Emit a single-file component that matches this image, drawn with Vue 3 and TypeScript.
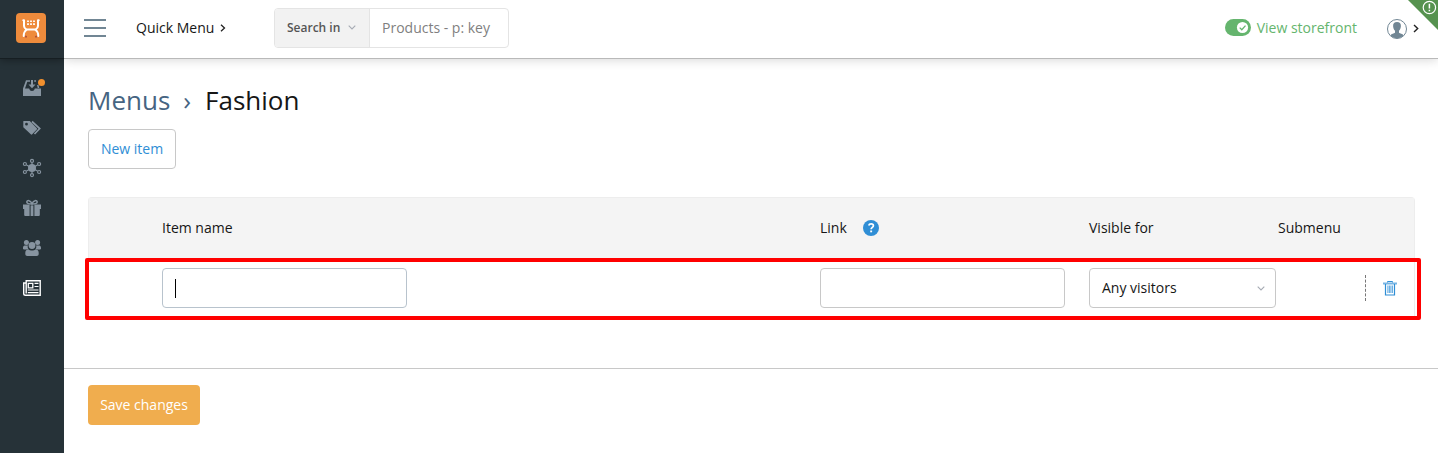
<script setup lang="ts">
import { ref } from 'vue'

const itemName = ref('')
const link = ref('')
const nav: string[] = ['orders', 'products', 'addons', 'marketing', 'customers', 'content']
</script>

<template>
  <div class="app">
    <aside class="sidebar">
      <div class="brand">
        <svg width="30" height="30" viewBox="0 0 30 30">
          <rect width="30" height="30" rx="4" fill="#ee8b3c" />
          <g fill="none" stroke="#fff" stroke-width="2" stroke-linecap="round" stroke-linejoin="round">
            <path d="M7.300 7.200H8V13c0 1.700.8 2.600 2.500 3.600h9c1.700-1 2.500-1.900 2.500-3.600V7.200h.7" />
            <path d="M10.500 16.800C8.500 18.200 7.700 19.500 7.700 23M19.500 16.800c2 1.400 2.800 2.700 2.800 6.200" />
          </g>
          <path d="M11 7.500h2v1.600h-2zM14 7.500h2v1.600h-2zM17 7.500h2v1.600h-2zM11 10.200h2v1.800h-2zM14 10.200h2v1.800h-2zM17 10.200h2v1.800h-2z" fill="#fff" opacity=".9" />
          <path d="M9 22.500l2 .5v1.500H9zM19 23l2-.5v2h-2z" fill="#b45236" />
        </svg>
      </div>
      <nav class="nav">
        <a v-for="n in nav" :key="n" class="nav-item" :class="{ active: n === 'content' }">
          <svg v-if="n === 'orders'" width="20" height="20" viewBox="0 0 20 20">
            <path d="M4 2.200h4v1.600H5.300L3 10.500h4.200c.3 1.700 1.400 2.500 2.800 2.500s2.500-.8 2.800-2.500H19V18H1v-7.500z" fill="currentColor" />
            <path d="M9 2h2v4.500h2.500L10 10.300 6.500 6.500H9zM12.200 2.200H14v1.600h-1.800zM15 7h1.500l.8 3h-1.600z" fill="currentColor" />
          </svg>
          <svg v-else-if="n === 'products'" width="20" height="20" viewBox="0 0 20 20">
            <path fill-rule="evenodd" d="M1.500 3h6.300l7 7.200a1 1 0 0 1 0 1.400l-4.600 4.700a1 1 0 0 1-1.400 0L1.300 9.200V3.500zM4.500 4.800a1.400 1.400 0 1 0 0 2.800 1.400 1.400 0 0 0 0-2.800z" fill="currentColor" />
            <path d="M10 3.500l7.700 7-5.200 5.500" fill="none" stroke="currentColor" stroke-width="1.700" />
          </svg>
          <svg v-else-if="n === 'addons'" width="20" height="20" viewBox="0 0 20 20">
            <circle cx="10" cy="10" r="4" fill="currentColor" />
            <g fill="none" stroke="currentColor" stroke-width="1.200">
              <path d="M10 4.500v11M4.500 7l11 6M15.500 7l-11 6" />
              <circle cx="10" cy="2.900" r="1.500" /><circle cx="10" cy="17.100" r="1.500" />
              <circle cx="2.900" cy="6" r="1.500" /><circle cx="17.100" cy="6" r="1.500" />
              <circle cx="2.900" cy="14" r="1.500" /><circle cx="17.100" cy="14" r="1.500" />
            </g>
          </svg>
          <svg v-else-if="n === 'marketing'" width="20" height="20" viewBox="0 0 20 20">
            <path d="M1 6.500h6.600V11H1zM12.400 6.500H19V11h-6.600zM2.200 11h5.400v7H3.200a1 1 0 0 1-1-1zM12.400 11h5.400v6a1 1 0 0 1-1 1h-4.400zM8.600 7.500h2.800V18H8.600z" fill="currentColor" />
            <path d="M10 6C8 6 4.800 5.800 4.800 4S8.500 1.500 10 6c1.500-4.500 5.200-3.800 5.200-2S12 6 10 6z" fill="none" stroke="currentColor" stroke-width="1.500" />
          </svg>
          <svg v-else-if="n === 'customers'" width="20" height="20" viewBox="0 0 20 20">
            <g fill="currentColor">
              <circle cx="4.400" cy="4.600" r="2.500" /><circle cx="15.600" cy="4.600" r="2.500" />
              <path d="M1 11V9.500C1 8 2 7.400 3.500 7.400h2.400c-.6 2 .1 3.200 1 4H2zM19 11V9.500c0-1.500-1-2.100-2.500-2.100h-2.400c.6 2-.1 3.200-1 4H18z" />
              <circle cx="10" cy="7.500" r="3.400" />
              <path d="M3.300 16v-1.300c0-2 1.300-3.200 3.200-3.200 1 .7 2 1 3.500 1s2.500-.3 3.500-1c1.900 0 3.200 1.200 3.200 3.200V16c0 1.300-.8 2-2 2H5.300c-1.200 0-2-.7-2-2z" />
            </g>
          </svg>
          <svg v-else width="20" height="20" viewBox="0 0 20 20">
            <path d="M4.200 2.700h14v14.600H3.500c-1.200 0-1.800-.6-1.800-1.800V5h2.500zM4.200 5v10.500" fill="none" stroke="currentColor" stroke-width="1.400" />
            <path d="M6.300 5.300h4.500v4.500H6.300z" fill="none" stroke="currentColor" stroke-width="1.300" />
            <path d="M12.500 5.300h4M12.500 8.500h4M5.800 12h10.700M5.800 14.600h10.700" stroke="currentColor" stroke-width="1.200" />
          </svg>
          <span v-if="n === 'orders'" class="dot"></span>
        </a>
      </nav>
    </aside>

    <div class="main">
      <header class="topbar">
        <svg class="burger" width="22" height="20" viewBox="0 0 22 20">
          <path d="M0 2h22M0 10h22M0 18h22" stroke="#718694" stroke-width="2" />
        </svg>
        <a class="quick">Quick Menu
          <svg width="6" height="8" viewBox="0 0 6 8"><path d="M1 .7L4.500 4 1 7.300" fill="none" stroke="#222" stroke-width="1.300" /></svg>
        </a>
        <div class="search">
          <button class="search-in">Search in
            <svg width="8" height="5" viewBox="0 0 8 5"><path d="M.7.700L4 4 7.300.7" fill="none" stroke="#a6abb4" stroke-width="1.100" /></svg>
          </button>
          <div class="search-box">Products - p: key</div>
        </div>
        <div class="right">
          <a class="storefront">
            <svg width="26" height="17" viewBox="0 0 26 17">
              <rect width="26" height="17" rx="8.500" fill="#65b56e" />
              <circle cx="17.500" cy="8.500" r="5.600" fill="#fff" />
              <path d="M14.700 8.600l2.100 2.100 3.700-4.100" fill="none" stroke="#65b56e" stroke-width="1.300" />
            </svg>
            <span>View storefront</span>
          </a>
          <a class="account">
            <svg width="20" height="20" viewBox="0 0 20 20">
              <circle cx="10" cy="10" r="9.500" fill="#fff" stroke="#718694" />
              <path d="M10 3c2.600 0 4 1.500 3.900 4-.1 1.800-.5 3.500-1.900 4.700v2.100c1 .8 3.600 1 4.500 2.500C15 18.200 12.700 19.300 10 19.300S5 18.200 3.500 16.300C4.400 14.800 7 14.600 8 13.800v-2.100C6.600 10.500 6.200 8.800 6.100 7 6 4.500 7.400 3 10 3z" fill="#718694" />
            </svg>
            <svg width="6" height="9" viewBox="0 0 6 9"><path d="M1 .900L4.700 4.500 1 8.100" fill="none" stroke="#222" stroke-width="1.400" /></svg>
          </a>
        </div>
        <svg class="corner" width="30" height="30" viewBox="0 0 30 30">
          <path d="M0 0h30v30z" fill="#56924f" />
          <circle cx="21.400" cy="7.500" r="6.200" fill="none" stroke="#fff" stroke-width="1.200" />
          <path d="M21.400 3.800v4.700M21.400 9.700v1.600" stroke="#fff" stroke-width="1.500" />
        </svg>
      </header>

      <main class="content">
        <h1 class="title">
          <a>Menus</a><span class="sep">›</span><span>Fashion</span>
        </h1>
        <button class="btn">New item</button>

        <section class="table">
          <div class="row head">
            <div>Item name</div>
            <div class="link-head">Link
              <svg width="16" height="16" viewBox="0 0 16 16">
                <circle cx="8" cy="8" r="8" fill="#2f8ed5" />
                <path d="M5.700 5.500C6 4.400 6.900 3.900 8.100 3.900c1.400 0 2.300.7 2.300 1.800 0 1.600-2.300 1.700-2.300 3.500" fill="none" stroke="#fff" stroke-width="1.700" />
                <path d="M7.200 10.500h1.900v1.800H7.200z" fill="#fff" />
              </svg>
            </div>
            <div>Visible for</div>
            <div>Submenu</div>
          </div>
          <div class="row body">
            <label class="field focused"><span class="caret"></span><input v-model="itemName" aria-label="Item name" /></label>
            <label class="field"><input v-model="link" aria-label="Link" /></label>
            <div class="select">Any visitors
              <svg width="8" height="5" viewBox="0 0 8 5"><path d="M.7.700L4 4 7.300.7" fill="none" stroke="#a6abb4" stroke-width="1.100" /></svg>
            </div>
            <div class="tools">
              <svg class="divider" width="1" height="26" viewBox="0 0 1 26"><path d="M.5 0v26" stroke="#777" stroke-dasharray="3 1.600" /></svg>
              <svg class="trash" width="14" height="15" viewBox="0 0 14 15">
                <path d="M0 1.500h14v2H0z" fill="#2f8ed5" opacity=".65" />
                <g fill="none" stroke="#2f8ed5">
                  <path d="M4.500 1.500V.5h5v1" />
                  <path d="M2.500 3v11h9V3" stroke-width="1.200" />
                  <path d="M4.900 4.500V12M6.400 4.500V12M7.900 4.500V12M9.400 4.500V12" stroke-width=".8" />
                </g>
              </svg>
            </div>
            <div class="highlight"></div>
          </div>
        </section>
      </main>

      <footer class="footer">
        <button class="save">Save changes</button>
      </footer>
    </div>
  </div>
</template>

<style>
body { margin: 0; overflow: hidden; background: #fff; }
</style>

<style scoped>
* { box-sizing: border-box; }
.app {
  display: grid;
  grid-template-columns: 64px 1fr;
  height: 453px;
  font: 14px/20px "Open Sans", sans-serif;
  color: #161616;
}
svg { display: block; flex: none; }
button { font: inherit; margin: 0; }
.sidebar { background: #263238; color: #8794a0; overflow: hidden; }
.brand {
  height: 58px;
  padding: 13px 0 0 16px;
  box-shadow: 0 1px 0 #161e22, 0 2px 8px rgba(0, 0, 0, .38);
}
.nav { padding-top: 10px; }
.nav-item { position: relative; display: flex; align-items: center; justify-content: center; height: 40px; }
.nav-item.active { color: #fff; }
.dot { position: absolute; left: 38px; top: 11px; width: 7px; height: 7px; border-radius: 50%; background: #f1902e; }
.main { display: flex; flex-direction: column; min-width: 0; overflow: hidden; }
.topbar {
  position: relative;
  display: flex;
  align-items: center;
  height: 59px;
  padding: 0 19px 3px 20px;
  border-bottom: 1px solid #b9b9b9;
  box-shadow: 0 1px 10px rgba(0, 0, 0, .16);
}
.quick { display: flex; align-items: center; gap: 6px; width: 138px; margin-left: 30px; }
.search {
  display: flex;
  width: 235px;
  height: 40px;
  border: 1px solid #e4e4e4;
  border-radius: 4px;
  overflow: hidden;
}
.search-in {
  display: flex;
  align-items: center;
  gap: 8px;
  width: 95px;
  padding: 0 0 0 12px;
  border: 0;
  border-right: 1px solid #e4e4e4;
  background: #f2f2f2;
  color: #555;
  font-size: 12px;
  font-weight: 600;
  white-space: nowrap;
}
.search-box { padding: 9px 12px; color: #7f7f7f; white-space: nowrap; }
.right { display: flex; align-items: center; gap: 30px; margin-left: auto; }
.storefront { display: flex; align-items: center; gap: 6px; color: #65b56e; }
.account { display: flex; align-items: center; gap: 6px; padding-top: 2px; }
.corner { position: absolute; top: 0; right: 0; }
.content { flex: 1; padding: 23px 23px 0 24px; }
.title {
  display: flex;
  height: 36px;
  margin: 0 0 11px;
  font-size: 26px;
  font-weight: 400;
  line-height: 36px;
}
.title a, .sep { color: #466482; }
.sep { margin: 0 14px 0 13px; }
.btn {
  display: block;
  width: 88px;
  height: 40px;
  padding: 0;
  border: 1px solid #c8c8c8;
  border-radius: 4px;
  background: #fff;
  color: #2f8ed5;
}
.table { margin-top: 28px; border: 1px solid #ededed; border-bottom: 0; border-radius: 4px 4px 0 0; }
.row { display: grid; grid-template-columns: 658px 269px 189px 1fr; padding-left: 73px; align-items: center; }
.head { height: 60px; background: #f4f4f4; }
.link-head { display: flex; align-items: center; gap: 16px; }
.body { position: relative; height: 60px; }
.field {
  display: flex;
  align-items: center;
  width: 245px;
  height: 40px;
  padding: 0 12px;
  border: 1px solid #c8c8c8;
  border-radius: 4px;
}
.field.focused { border-color: #b8c3cd; }
.field input { width: 100%; min-width: 0; border: 0; padding: 0; outline: 0; font: inherit; background: transparent; }
.caret { flex: none; width: 1px; height: 19px; background: #000; }
.select {
  display: flex;
  align-items: center;
  justify-content: space-between;
  width: 187px;
  height: 40px;
  padding: 0 10px 0 12px;
  border: 1px solid #c8c8c8;
  border-radius: 4px;
}
.tools { display: flex; align-items: center; justify-content: flex-end; gap: 17px; padding-right: 17px; }
.trash { margin-top: 1px; }
.highlight { position: absolute; inset: 0 -7px -2px -4px; border: 4px solid #f00; border-radius: 2px; }
.footer { height: 85px; padding: 16px 24px; border-top: 1px solid #c8c8c8; }
.save {
  display: block;
  width: 112px;
  height: 40px;
  padding: 0;
  border: 0;
  border-radius: 4px;
  background: #f0ad4e;
  color: #fff;
}
</style>
